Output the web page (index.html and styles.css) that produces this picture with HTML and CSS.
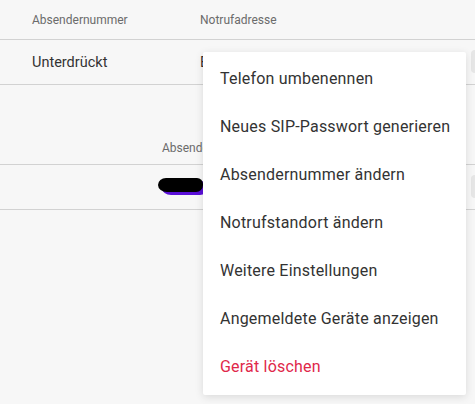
FILE: index.html
```html
<!DOCTYPE html>
<html lang="de">
<head>
<meta charset="utf-8">
<link rel="stylesheet" href="styles.css">
</head>
<body>
<div class="page">
  <div class="table t1">
    <div class="row head">
      <span class="c1">Absendernummer</span>
      <span class="c2">Notrufadresse</span>
    </div>
    <div class="row body">
      <span class="c1">Unterdrückt</span>
      <span class="c2">B</span>
      <span class="btn"></span>
    </div>
  </div>
  <div class="table t2">
    <div class="row head">
      <span class="c3">Absendernummer</span>
    </div>
    <div class="row body">
      <span class="c4"><span class="scribble"></span></span>
      <span class="btn"></span>
    </div>
  </div>
  <ul class="menu">
    <li>Telefon umbenennen</li>
    <li>Neues SIP-Passwort generieren</li>
    <li>Absendernummer ändern</li>
    <li>Notrufstandort ändern</li>
    <li>Weitere Einstellungen</li>
    <li>Angemeldete Geräte anzeigen</li>
    <li class="danger">Gerät löschen</li>
  </ul>
</div>
</body>
</html>
```
FILE: styles.css
```css
html, body {
  margin: 0;
  padding: 0;
  background: #f7f7f7;
  font-family: Roboto, "Liberation Sans", sans-serif;
  color: #333;
}
.page {
  position: relative;
  width: 475px;
  height: 404px;
  overflow: hidden;
}
.table {
  display: flex;
  flex-direction: column;
}
.t2 {
  margin-top: 47px;
}
.row {
  position: relative;
  display: flex;
  align-items: center;
  border-bottom: 1px solid #d2d2d2;
}
.row.head {
  height: 39px;
  font-size: 12px;
  color: #6b6b6b;
}
.t2 .row.head {
  height: 33px;
  align-items: flex-end;
  padding-bottom: 9px;
  box-sizing: border-box;
}
.row.body {
  height: 44px;
  font-size: 14.5px;
  color: #333;
}
.c1 {
  width: 168px;
  padding-left: 32px;
}
.c2 {
  flex: 1;
}
.c3 {
  padding-left: 162px;
}
.c4 {
  padding-left: 158px;
  display: flex;
}
.scribble {
  display: block;
  width: 45px;
  height: 14px;
  margin-top: -4px;
  background: #000;
  border-radius: 8px 6px 7px 9px / 7px 6px 7px 7px;
  box-shadow: 4px 3px 0 0 #5a0fd8;
}
.btn {
  position: absolute;
  left: 471px;
  top: 10px;
  width: 30px;
  height: 23px;
  border-radius: 4px;
  background: #e6e6e6;
}
.menu {
  position: absolute;
  left: 203px;
  top: 52px;
  width: 263px;
  height: 343px;
  box-sizing: border-box;
  margin: 0;
  padding: 2px 0 5px;
  list-style: none;
  background: #fff;
  border-radius: 2px;
  box-shadow: 0 2px 8px rgba(0, 0, 0, 0.12);
}
.menu li {
  height: 48px;
  display: flex;
  align-items: center;
  padding-left: 17px;
  font-size: 16px;
  letter-spacing: 0.2px;
  color: #333;
}
.menu li.danger {
  color: #e0284a;
}
```
